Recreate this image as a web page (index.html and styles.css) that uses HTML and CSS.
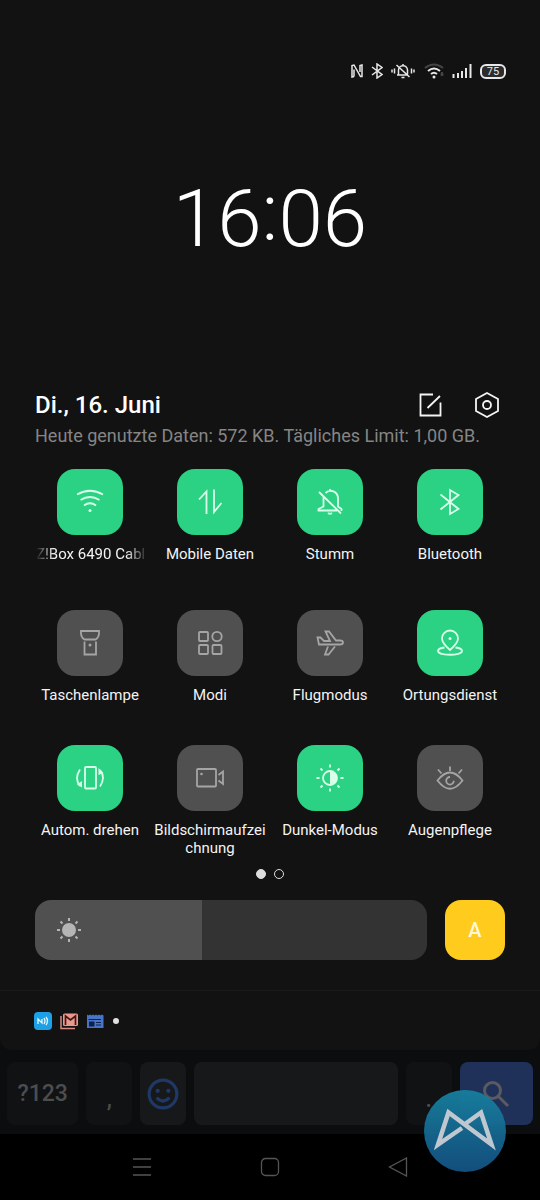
FILE: index.html
```html
<!DOCTYPE html>
<html lang="de">
<head>
<meta charset="utf-8">
<meta name="viewport" content="width=device-width, initial-scale=1">
<title>Schnelleinstellungen</title>
<link rel="stylesheet" href="styles.css">
</head>
<body>
<div class="screen">
  <main class="panel">
    <header class="status">
      <svg class="status-n" viewBox="0 0 12 14" aria-label="NFC"><path d="M3 12.500 1 13V1.500L3 1l6.500 11.500 1.500 0V1L9 1.500V8M3 5.500v7"/></svg>
      <svg class="status-bt" viewBox="0 0 12 16" aria-label="Bluetooth"><path d="M1 4l10 7.500L6 15V1l5 3.500L1 12"/></svg>
      <svg class="status-bell" viewBox="0 0 24 16" aria-label="Stumm"><path d="M1 6.500v3M3.500 5.500v5M20.500 5.500v5M23 6.500v3M6 12h11M7.500 12V7.500a4.500 4.500 0 0 1 9-.5v4.500M12 1v2M10.500 14.500h3M5.500 2l13 12"/></svg>
      <svg class="status-wifi" viewBox="0 0 22 16" aria-label="WLAN"><path class="faint" d="M1 5q9-7 18 0"/><path d="M4 8q6-5 12 0M7 11q3-2.500 6 0"/><circle class="solid" cx="10" cy="14" r="1.500"/><path class="faint" d="M18 9v4M16.500 11.500h3"/></svg>
      <svg class="status-signal" viewBox="0 0 20 16" aria-label="Signal"><path d="M1.500 15v-4M6 15v-5M10 15V8M14 15V5M18.500 15V1"/></svg>
      <span class="battery">75</span>
    </header>

    <time class="clock" datetime="16:06">16<span class="colon">:</span>06</time>

    <section class="heading">
      <h1 class="date">Di., 16. Juni</h1>
      <button class="icon-button" aria-label="Bearbeiten"><svg viewBox="0 0 26 26"><path d="M16 2.500H3.500v21h20V10.500M10.500 16 23 4"/></svg></button>
      <button class="icon-button" aria-label="Einstellungen"><svg viewBox="0 0 26 26"><path d="M13 1l11 6v12l-11 6-11-6V7z"/><circle cx="13" cy="13" r="4"/></svg></button>
    </section>
    <p class="usage">Heute genutzte Daten: 572 KB. Tägliches Limit: 1,00 GB.</p>

    <section class="tiles" aria-label="Kacheln">
      <button class="tile on"><span class="tile-face"><svg viewBox="0 0 30 30"><path d="M2 7.500Q15 0 28 7.500M5.500 13q9.500-6 19 0M9 18.500q6-4.500 12 0"/><circle class="solid" cx="15" cy="23.500" r="1.500"/></svg></span><span class="tile-label marquee">Z!Box 6490 Cabl</span></button>
      <button class="tile on"><span class="tile-face"><svg viewBox="0 0 30 30"><path d="M4 12.500l7.500-8V27M19 2.500V25l7.500-9"/></svg></span><span class="tile-label">Mobile Daten</span></button>
      <button class="tile on"><span class="tile-face"><svg viewBox="0 0 30 30"><path d="M8.500 9.500v10l-5 2.500v1.500H22M10.500 6c4.500-4.500 12.500-1.500 12.500 5.500v8l3.500 2.500v2M15 2v2M13 26q2 1.500 4 0M4 5l22 21.500"/></svg></span><span class="tile-label">Stumm</span></button>
      <button class="tile on"><span class="tile-face"><svg viewBox="0 0 30 30"><path d="M5.500 7.500 23.500 22 15 27V3l8.500 5L5.500 22.500"/></svg></span><span class="tile-label">Bluetooth</span></button>

      <button class="tile"><span class="tile-face"><svg viewBox="0 0 30 30"><path d="M6 3h18v3q-.5 4-3.500 5.500h-11Q6.500 10 6 6zM9.500 13.500v13h11.500v-13"/><circle class="solid" cx="15" cy="17" r="1.500"/></svg></span><span class="tile-label">Taschenlampe</span></button>
      <button class="tile"><span class="tile-face"><svg viewBox="0 0 30 30"><rect x="4" y="4" width="9" height="9" rx="1"/><circle cx="22" cy="8.500" r="4.700"/><rect x="4" y="17" width="9" height="9" rx="1"/><rect x="17.500" y="17" width="9" height="9" rx="1"/></svg></span><span class="tile-label">Modi</span></button>
      <button class="tile"><span class="tile-face"><svg viewBox="0 0 30 30"><path d="M2.500 9.500h3l3.500 3.500h6L10.500 3.500H14l7 9h4q3 0 3 2t-3 2H4zM13 18.500l-3 8h3.500l6.500-8"/></svg></span><span class="tile-label">Flugmodus</span></button>
      <button class="tile on"><span class="tile-face"><svg viewBox="0 0 30 30"><path d="M15 22q-8-7-8-11.500a8 8 0 0 1 16 0Q23 15 15 22zM9.500 19.500C5 20 3 21 3 23c0 5 24 5 24 0 0-2-2-3-6.500-3.500"/><circle class="solid" cx="15" cy="10.500" r="1.500"/></svg></span><span class="tile-label">Ortungsdienst</span></button>

      <button class="tile on"><span class="tile-face"><svg viewBox="0 0 30 30"><rect x="10" y="4" width="11" height="21.500" rx="1"/><path d="M5 6.500q-6 9 0 16.500M25 23.500q6-9 0-16.500"/><path class="solid" d="M7 18v6.500l-5-3zM23.500 5l5 5-5 2z"/></svg></span><span class="tile-label">Autom. drehen</span></button>
      <button class="tile"><span class="tile-face"><svg viewBox="0 0 30 30"><rect x="2" y="6" width="19" height="17.500" rx="1"/><path d="M23.500 12l4.500-3.500V21l-4.500-3.500"/><circle class="solid" cx="6.500" cy="11" r="1.300"/></svg></span><span class="tile-label">Bildschirmaufzei<wbr>chnung</span></button>
      <button class="tile on"><span class="tile-face"><svg viewBox="0 0 30 30"><circle cx="15" cy="15" r="7"/><path class="solid" d="M15 8a7 7 0 0 1 0 14z"/><path d="M15 1.500v3M15 25.500v3M1.500 15h3M25.500 15h3M5.500 5.500l2 2M22.500 22.500l2 2M5.500 24.500l2-2M22.500 7.500l2-2"/></svg></span><span class="tile-label">Dunkel-Modus</span></button>
      <button class="tile"><span class="tile-face"><svg viewBox="0 0 30 30"><path d="M2.500 17.500Q15 1.500 27.500 17.500 15 34 2.500 17.500zM15 14a3.800 3.800 0 1 0 3.800 3.800M15 3.500v4.500M3 6.500l3.500 4M27 6.500l-3.500 4"/></svg></span><span class="tile-label">Augenpflege</span></button>
    </section>

    <div class="pages"><span class="page current"></span><span class="page"></span></div>

    <section class="brightness">
      <label class="slider">
        <svg class="sun" viewBox="0 0 26 26" aria-hidden="true"><circle cx="13" cy="13" r="7"/><path d="M13 1v3M13 22v3M1 13h3M22 13h3M4.500 4.500l2 2M19.500 19.500l2 2M4.500 21.500l2-2M19.500 6.500l2-2"/></svg>
        <input class="range" type="range" min="0" max="1000" value="425" aria-label="Helligkeit">
      </label>
      <button class="auto" aria-label="Automatische Helligkeit">A</button>
    </section>

    <footer class="notifications">
      <svg class="note" viewBox="0 0 18 18" aria-label="NFC"><rect width="18" height="18" rx="4" fill="#1da1e6"/><path d="M4 12V7l4 4V7M10 6q2 3 0 6M12 5q3 4 0 8" fill="none" stroke="#e6f7ff" stroke-width="1.300"/></svg>
      <svg class="note" viewBox="0 0 18 18" aria-label="Gmail"><path d="M1 4v12.500h14" fill="none" stroke="#d98b82" stroke-width="1.500"/><rect x="3" y="1.500" width="15" height="12.500" rx="1.500" fill="#e8988e"/><path d="M5.500 13V4l5 4 5-4v9" fill="none" stroke="#451512" stroke-width="1.700"/></svg>
      <svg class="note" viewBox="0 0 18 18" aria-label="Nachrichten"><path d="M1 2.500l1.500 1 1.500-1 1.500 1 1.500-1 1.500 1 1.500-1 1.500 1 1.500-1 1.500 1 1.500-1 1.500 1V16H1z" fill="#4776c8"/><path d="M2.500 7h12.500v1H2.500zM3 9.500h5.500v5H3zM10 10h5v1h-5zM10 12.500h5v1h-5z" fill="#10204a"/></svg>
      <span class="more"></span>
    </footer>
  </main>

  <section class="keyboard" aria-label="Tastatur">
    <button class="key">?123</button>
    <button class="key low">,</button>
    <button class="key light" aria-label="Emoji"><svg class="smile" viewBox="0 0 30 30"><circle cx="15" cy="15" r="13"/><circle class="eye" cx="10" cy="12" r="2"/><circle class="eye" cx="20" cy="12" r="2"/><path d="M9 18.500q6 6 12 0"/></svg></button>
    <button class="key light" aria-label="Leertaste"></button>
    <button class="key low">.</button>
    <button class="key search" aria-label="Suchen"><svg class="lens" viewBox="0 0 28 28"><circle cx="10.500" cy="10.500" r="8"/><path d="M16.500 16.500 26 26"/></svg></button>
  </section>

  <nav class="nav">
    <button class="nav-button" aria-label="Menü"><svg viewBox="0 0 20 20"><path d="M1 2h18M1 10h18M1 18h18"/></svg></button>
    <button class="nav-button" aria-label="Startseite"><svg viewBox="0 0 20 20"><rect x="1.500" y="1.500" width="17" height="17" rx="4"/></svg></button>
    <button class="nav-button" aria-label="Zurück"><svg viewBox="0 0 20 20"><path d="M18.500 1v18L1.500 10z"/></svg></button>
  </nav>

  <svg class="badge" viewBox="0 0 82 82" aria-hidden="true">
    <defs><linearGradient id="badge-fill" x1="0" y1="0" x2="0" y2="1"><stop offset="0" stop-color="#16809f"/><stop offset="1" stop-color="#145283"/></linearGradient></defs>
    <circle cx="41" cy="41" r="41" fill="url(#badge-fill)" fill-opacity=".95"/>
    <path d="M38 38 14 54.500 24.500 22.500 67.500 54.500 57 22.500 41 34" fill="none" stroke="#bfc8d0" stroke-width="4.500" stroke-miterlimit="8"/>
  </svg>
</div>
</body>
</html>
```
FILE: styles.css
```css
* {
  box-sizing: border-box;
}

body {
  margin: 0;
  background: #000;
  color: #f4f4f4;
  font-family: Roboto, "Liberation Sans", sans-serif;
}

button {
  margin: 0;
  padding: 0;
  border: 0;
  background: none;
  color: inherit;
  font: inherit;
}

svg {
  display: block;
  flex: none;
  fill: none;
  stroke: currentColor;
}

svg .solid {
  fill: currentColor;
  stroke: none;
}

.screen {
  position: relative;
  display: flex;
  flex-direction: column;
  min-height: 100vh;
  background: #0b0d0f;
}

.panel {
  background: #121212;
  border-radius: 0 0 12px 12px;
}

.status {
  display: flex;
  justify-content: flex-end;
  align-items: center;
  height: 40px;
  margin-top: 51px;
  padding-right: 34px;
  color: #e8e8e8;
  stroke-width: 2;
}

.status-n {
  width: 12px;
  height: 14px;
  margin-right: 8px;
  stroke-width: 1.5;
}

.status-bt {
  width: 12px;
  height: 16px;
  margin-right: 8px;
  stroke-width: 1.5;
}

.status-bell {
  width: 24px;
  height: 16px;
  margin-right: 9px;
  stroke-width: 1.5;
}

.status-wifi {
  width: 22px;
  height: 16px;
  margin-right: 6px;
}

.status-wifi .faint {
  stroke: #444;
}

.status-signal {
  width: 20px;
  height: 16px;
  margin-right: 8px;
}

.battery {
  width: 26px;
  border: 2px solid #e8e8e8;
  border-radius: 6px;
  background: #2c2c2c;
  font-size: 11px;
  line-height: 11px;
  text-align: center;
}

.clock {
  display: block;
  margin-top: 80px;
  color: #fff;
  font-size: 80px;
  font-weight: 300;
  line-height: 96px;
  text-align: center;
}

.colon {
  line-height: 1;
  vertical-align: 6px;
}

.heading {
  display: flex;
  align-items: center;
  gap: 31px;
  margin-top: 122px;
  padding: 0 40px 0 35px;
}

.date {
  flex: 1;
  margin: 0;
  color: #fff;
  font-size: 24px;
  font-weight: 500;
  line-height: 32px;
}

.icon-button svg {
  width: 26px;
  height: 26px;
  stroke-width: 1.8;
}

.usage {
  margin: 3px 35px 0;
  color: #858585;
  font-size: 18px;
  line-height: 24px;
}

.tiles {
  display: grid;
  grid-template-columns: repeat(4, 1fr);
  row-gap: 41px;
  margin-top: 21px;
  padding: 0 30px;
}

.tile {
  display: flex;
  flex-direction: column;
  align-items: center;
  gap: 10px;
}

.tile-face {
  display: grid;
  place-items: center;
  width: 66px;
  height: 66px;
  border-radius: 18px;
  background: #505050;
  color: #a5a5a5;
}

.tile.on .tile-face {
  background: #2bd283;
  color: #d9ffeb;
}

.tile-face svg {
  width: 30px;
  height: 30px;
  stroke-width: 1.8;
}

.tile-label {
  max-width: 114px;
  font-size: 15px;
  line-height: 18px;
  text-align: center;
}

.marquee {
  width: 108px;
  padding-bottom: 6px;
  overflow: hidden;
  white-space: nowrap;
  mask-image: linear-gradient(90deg, transparent, #000 18px, #000 90px, transparent 112px);
}

.pages {
  display: flex;
  justify-content: center;
  gap: 8px;
  margin-top: 12px;
}

.page {
  width: 10px;
  height: 10px;
  border: 1px solid #ddd;
  border-radius: 50%;
}

.page.current {
  background: #ddd;
}

.brightness {
  display: flex;
  gap: 18px;
  margin-top: 21px;
  padding: 0 35px;
}

.slider {
  position: relative;
  flex: 1;
  height: 60px;
}

.range {
  display: block;
  width: 100%;
  height: 60px;
  margin: 0;
  border-radius: 16px;
  background: linear-gradient(90deg, #505050 42.5%, #333 42.5%);
  appearance: none;
}

.range::-webkit-slider-thumb {
  width: 1px;
  height: 60px;
  appearance: none;
}

.sun {
  position: absolute;
  top: 17px;
  left: 21px;
  width: 26px;
  height: 26px;
  stroke: #b5b5b5;
  stroke-width: 2;
}

.sun circle {
  fill: #b5b5b5;
  stroke: none;
}

.auto {
  width: 60px;
  height: 60px;
  border-radius: 16px;
  background: #ffcb1c;
  color: #fff8d8;
  font-size: 20px;
  font-weight: 500;
}

.notifications {
  display: flex;
  align-items: center;
  gap: 8px;
  height: 60px;
  margin-top: 30px;
  padding-left: 34px;
  border-top: 1px solid #1a1a1a;
}

.note {
  width: 18px;
  height: 18px;
  stroke: none;
}

.more {
  width: 6px;
  height: 6px;
  margin-left: 1px;
  border-radius: 50%;
  background: #e0e0e0;
}

.keyboard {
  display: grid;
  grid-template-columns: 72fr 46fr 46fr 206fr 46fr 74fr;
  gap: 8px;
  padding: 12px 7px 9px;
}

.key {
  display: grid;
  place-items: center;
  height: 63px;
  border-radius: 8px;
  background: #111214;
  color: #4c4d4e;
  font-size: 23px;
  font-weight: 500;
}

.key.low {
  padding-top: 12px;
}

.key.light {
  background: #17181a;
}

.key.search {
  background: #1f3158;
}

.smile {
  width: 32px;
  height: 32px;
  stroke: #1f3866;
  stroke-width: 3;
}

.smile .eye {
  fill: #1f3866;
  stroke: none;
}

.lens {
  width: 28px;
  height: 28px;
  stroke: #5a5a60;
  stroke-width: 3;
}

.nav {
  display: flex;
  flex: 1;
  justify-content: center;
  align-items: center;
  gap: 108px;
  min-height: 66px;
  background: #000;
  color: #555;
}

.nav-button svg {
  width: 20px;
  height: 20px;
  stroke-width: 1.3;
}

.badge {
  position: absolute;
  right: 34px;
  bottom: 28px;
  width: 82px;
  height: 82px;
  stroke: none;
}
```
